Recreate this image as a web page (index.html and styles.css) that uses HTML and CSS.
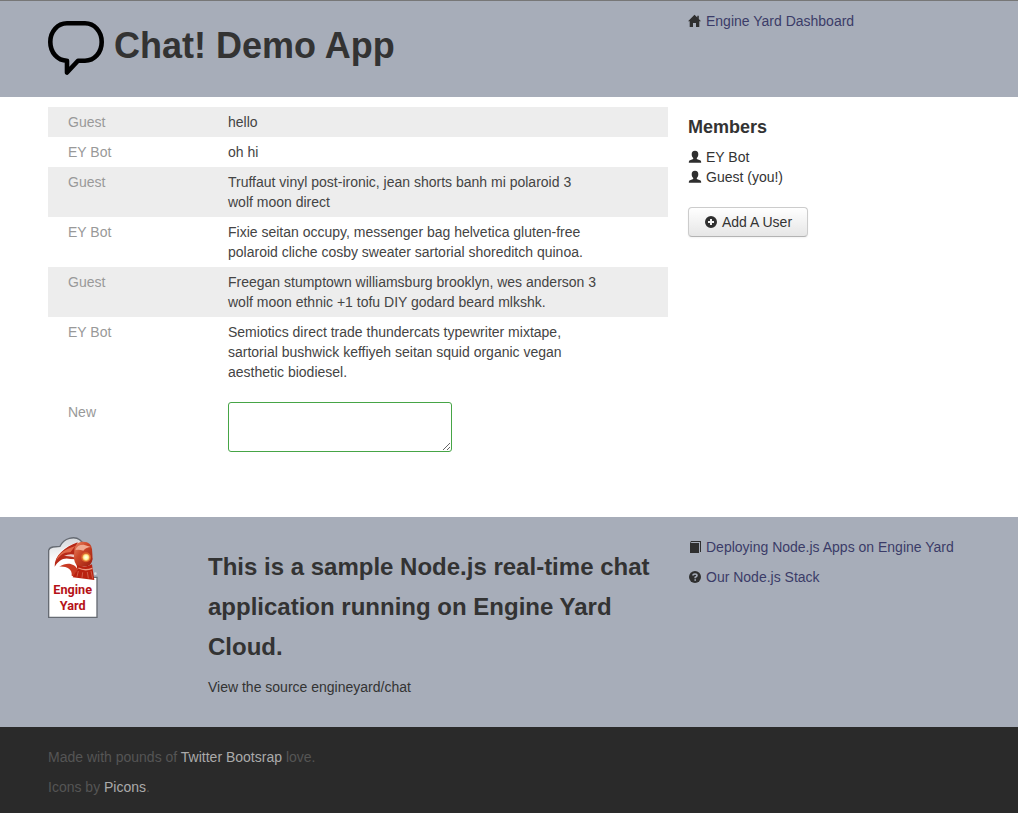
FILE: index.html
```html
<!DOCTYPE html>
<html lang="en">
<head>
<meta charset="utf-8">
<title>Chat! Demo App</title>
<link rel="stylesheet" href="styles.css">
</head>
<body>
<header class="band header">
  <div class="columns">
    <h1 class="title">
      <svg class="bubble" viewBox="0 0 56 55" aria-hidden="true"><path d="M19 2.3H37C46.5 2.3 53.7 10.5 53.7 21S46.5 39.7 37 39.7H30L19 51.5V39.7C9.5 39.7 2.3 31.5 2.3 21S9.5 2.3 19 2.3Z" fill="none" stroke="#000" stroke-width="4.6" stroke-linejoin="round"/></svg>
      <span>Chat! Demo App</span>
    </h1>
    <nav class="links">
      <a href="#"><svg class="icon" viewBox="0 0 14 14" aria-hidden="true"><path d="M6.5 .8 0 7.3H1.7V13H5V9H8V13H11.3V7.3H13L10.8 5V1.8H9.3V3.5Z"/></svg>Engine Yard Dashboard</a>
    </nav>
  </div>
</header>

<main class="band main">
  <div class="columns">
    <section class="chat">
      <dl class="messages">
        <div class="message"><dt>Guest</dt><dd>hello</dd></div>
        <div class="message"><dt>EY Bot</dt><dd>oh hi</dd></div>
        <div class="message"><dt>Guest</dt><dd>Truffaut vinyl post-ironic, jean shorts banh mi polaroid 3 wolf moon direct</dd></div>
        <div class="message"><dt>EY Bot</dt><dd>Fixie seitan occupy, messenger bag helvetica gluten-free polaroid cliche cosby sweater sartorial shoreditch quinoa.</dd></div>
        <div class="message"><dt>Guest</dt><dd>Freegan stumptown williamsburg brooklyn, wes anderson 3 wolf moon ethnic +1 tofu DIY godard beard mlkshk.</dd></div>
        <div class="message"><dt>EY Bot</dt><dd>Semiotics direct trade thundercats typewriter mixtape, sartorial bushwick keffiyeh seitan squid organic vegan aesthetic biodiesel.</dd></div>
      </dl>
      <form class="compose">
        <label for="new-message">New</label>
        <textarea id="new-message" rows="2"></textarea>
      </form>
    </section>
    <aside class="members">
      <h2>Members</h2>
      <ul>
        <li><svg class="icon" viewBox="0 0 14 14" aria-hidden="true"><path d="M7 .8C9.4 .8 10.3 2.2 10.3 4.2 10.3 6 9.7 7.2 8.8 8V9L12.6 10.5Q13.2 11 13.2 12.8H.8Q.8 11 1.4 10.5L5.2 9V8C4.3 7.2 3.7 6 3.7 4.2 3.7 2.2 4.6 .8 7 .8Z"/></svg>EY Bot</li>
        <li><svg class="icon" viewBox="0 0 14 14" aria-hidden="true"><path d="M7 .8C9.4 .8 10.3 2.2 10.3 4.2 10.3 6 9.7 7.2 8.8 8V9L12.6 10.5Q13.2 11 13.2 12.8H.8Q.8 11 1.4 10.5L5.2 9V8C4.3 7.2 3.7 6 3.7 4.2 3.7 2.2 4.6 .8 7 .8Z"/></svg>Guest (you!)</li>
      </ul>
      <button class="button" type="button"><svg class="icon" viewBox="0 0 14 14" aria-hidden="true"><path fill-rule="evenodd" d="M7 1a6 6 0 1 0 0 12A6 6 0 1 0 7 1ZM6 4H8V6H10V8H8V10H6V8H4V6H6Z"/></svg>Add A User</button>
    </aside>
  </div>
</main>

<section class="band about">
  <div class="columns">
    <div class="pitch">
      <a class="logo" href="#" aria-label="Engine Yard">
        <svg viewBox="24 21 150 243" aria-hidden="true">
          <defs>
            <linearGradient id="paper" x1="0" y1="0" x2="0" y2="1"><stop offset="0" stop-color="#d5d8dc"/><stop offset=".3" stop-color="#fff"/></linearGradient>
            <linearGradient id="boiler" x1="0" y1="0" x2="1" y2="1"><stop offset="0" stop-color="#e98a69"/><stop offset=".4" stop-color="#cc4729"/><stop offset="1" stop-color="#9a1c0d"/></linearGradient>
            <radialGradient id="lamp"><stop offset="0" stop-color="#fff"/><stop offset=".6" stop-color="#fff7a0"/><stop offset="1" stop-color="#ee9d45"/></radialGradient>
          </defs>
          <path d="M26 61Q28 53 39 51L60 49Q69 30 88 25Q107 20 119 29L128 38 152 142H171V262H26Z" fill="url(#paper)" stroke="#666b73" stroke-width="4"/>
          <path d="M43 113C41 77 65 52 108 38L130 36 154 52 157 84 147 107 114 118C98 101 72 93 43 113Z" fill="#fff"/>
          <path d="M44 110C43 77 73 52 113 37L108 88 92 87C70 81 56 91 44 110Z" fill="#b72918"/>
          <path d="M48 93C55 69 76 57 106 48L91 67C72 66 60 76 48 93Z" fill="#e1694a"/>
          <path d="M72 78Q88 70 107 75V83Q90 77 72 78Z" fill="#fff" opacity=".75"/>
          <path d="M57 110C83 94 104 101 113 118L104 141 95 137C98 117 78 108 57 110Z" fill="#c93a23"/>
          <path d="M103 62C104 42 115 35 130 35 146 35 154 44 156 57L158 87Q154 105 143 109L116 112Q100 99 102 74Z" fill="url(#boiler)"/>
          <path d="M106 60Q112 43 131 44L153 51Q139 51 130 62Q117 57 106 60Z" fill="#f0aa91"/>
          <path d="M110 104Q131 117 156 103L158 118 163 150 98 142 112 119Z" fill="#b9210f"/>
          <path d="M115 114Q136 124 157 115" fill="none" stroke="#ed9b82" stroke-width="4"/>
          <path d="M115 123L111 140M128 127L126 143M142 126L145 145M153 123L158 146" fill="none" stroke="#dc7963" stroke-width="2"/>
          <circle cx="138" cy="82" r="15" fill="#d9622c"/><circle cx="138" cy="82" r="11" fill="url(#lamp)"/>
          <circle cx="166" cy="131" r="4" fill="#d9dce2"/>
          <text class="logo-text" x="98" y="193">Engine</text>
          <text class="logo-text" x="98" y="241">Yard</text>
        </svg>
      </a>
      <div class="copy">
        <h2>This is a sample Node.js real-time chat application running on Engine Yard Cloud.</h2>
        <p>View the source <a href="#">engineyard/chat</a></p>
      </div>
    </div>
    <nav class="links">
      <a href="#"><svg class="icon" viewBox="0 0 14 14" aria-hidden="true"><path d="M3 1H13V12H12V2H3.5L2.5 3H11V13H2V3Z"/></svg>Deploying Node.js Apps on Engine Yard</a>
      <a href="#"><svg class="icon" viewBox="0 0 14 14" aria-hidden="true"><circle cx="7" cy="7" r="6"/><path d="M5 5.6Q5 4 7 4T9 5.5Q9 6.5 7.2 7.2V8.3M7.2 9.2V10.8" fill="none" stroke="#a7adb9" stroke-width="1.6"/></svg>Our Node.js Stack</a>
    </nav>
  </div>
</section>

<footer class="band credits">
  <p>Made with pounds of <a href="#">Twitter Bootsrap</a> love.</p>
  <p>Icons by <a href="#">Picons</a>.</p>
</footer>
</body>
</html>
```

FILE: styles.css
```css
* { box-sizing: border-box; }

body {
  margin: 0;
  min-height: 100vh;
  display: flex;
  flex-direction: column;
  background: #fff;
  color: #333;
  font: 14px/20px "Liberation Sans", Arial, sans-serif;
}

h1, h2, p, ul, dl, dd { margin: 0; padding: 0; }
ul { list-style: none; }
a { text-decoration: none; }

.band { padding-left: 48px; padding-right: 30px; }

.columns {
  display: grid;
  grid-template-columns: minmax(0, 31fr) minmax(0, 15fr);
  column-gap: 20px;
}

.icon {
  width: 14px;
  height: 14px;
  flex: none;
  margin-right: 4px;
  fill: #2f2f2f;
}

.header {
  padding-top: 10px;
  padding-bottom: 21px;
  border-top: 1px solid #777;
  background: #a7adb9;
}

.title {
  display: flex;
  gap: 10px;
  padding-top: 10px;
  font-size: 36px;
  line-height: 50px;
}

.bubble { width: 56px; height: 55px; }

.links {
  display: flex;
  flex-direction: column;
  align-items: flex-start;
  gap: 10px;
}

.links a {
  display: flex;
  align-items: center;
  color: #3b3c68;
}

.main { padding-top: 10px; padding-bottom: 65px; }

.message {
  display: grid;
  grid-template-columns: 160px minmax(0, 370px);
  padding: 5px 20px;
}

.message:nth-child(odd) { background: #ededed; }
.message dt, .compose label { color: #999; }
.message dd { color: #444; }

.compose {
  display: grid;
  grid-template-columns: 160px 224px;
  padding: 15px 20px 0;
}

.compose textarea {
  width: 100%;
  height: 50px;
  padding: 4px 6px;
  border: 1px solid #46a546;
  border-radius: 3px;
  background: #fff;
  font: inherit;
  resize: both;
}

.members { padding-top: 10px; }

.members h2 {
  margin-bottom: 10px;
  font-size: 18px;
  line-height: 20px;
}

.members li { display: flex; align-items: center; }

.button {
  display: flex;
  align-items: center;
  margin-top: 20px;
  padding: 4px 15px;
  border: 1px solid #ccc;
  border-bottom-color: #b3b3b3;
  border-radius: 4px;
  background: linear-gradient(#fff, #e6e6e6);
  box-shadow: 0 1px 2px rgba(0, 0, 0, .05);
  color: #333;
  font: inherit;
}

.about {
  padding-top: 20px;
  padding-bottom: 30px;
  background: #a7adb9;
}

.pitch {
  display: grid;
  grid-template-columns: 140px minmax(0, 1fr);
  column-gap: 20px;
}

.logo svg { display: block; width: 50px; height: 81px; }

.logo-text {
  fill: #b51218;
  font: bold 38px Roboto, sans-serif;
  text-anchor: middle;
}

.copy { padding-top: 10px; }

.copy h2 {
  margin-bottom: 10px;
  font-size: 24px;
  line-height: 40px;
}

.copy a { color: #333; }

.credits {
  flex: 1;
  display: flex;
  flex-direction: column;
  gap: 10px;
  padding-top: 20px;
  padding-bottom: 16px;
  background: #2a2a2a;
  color: #555;
}

.credits a { color: #aaa; }
```
